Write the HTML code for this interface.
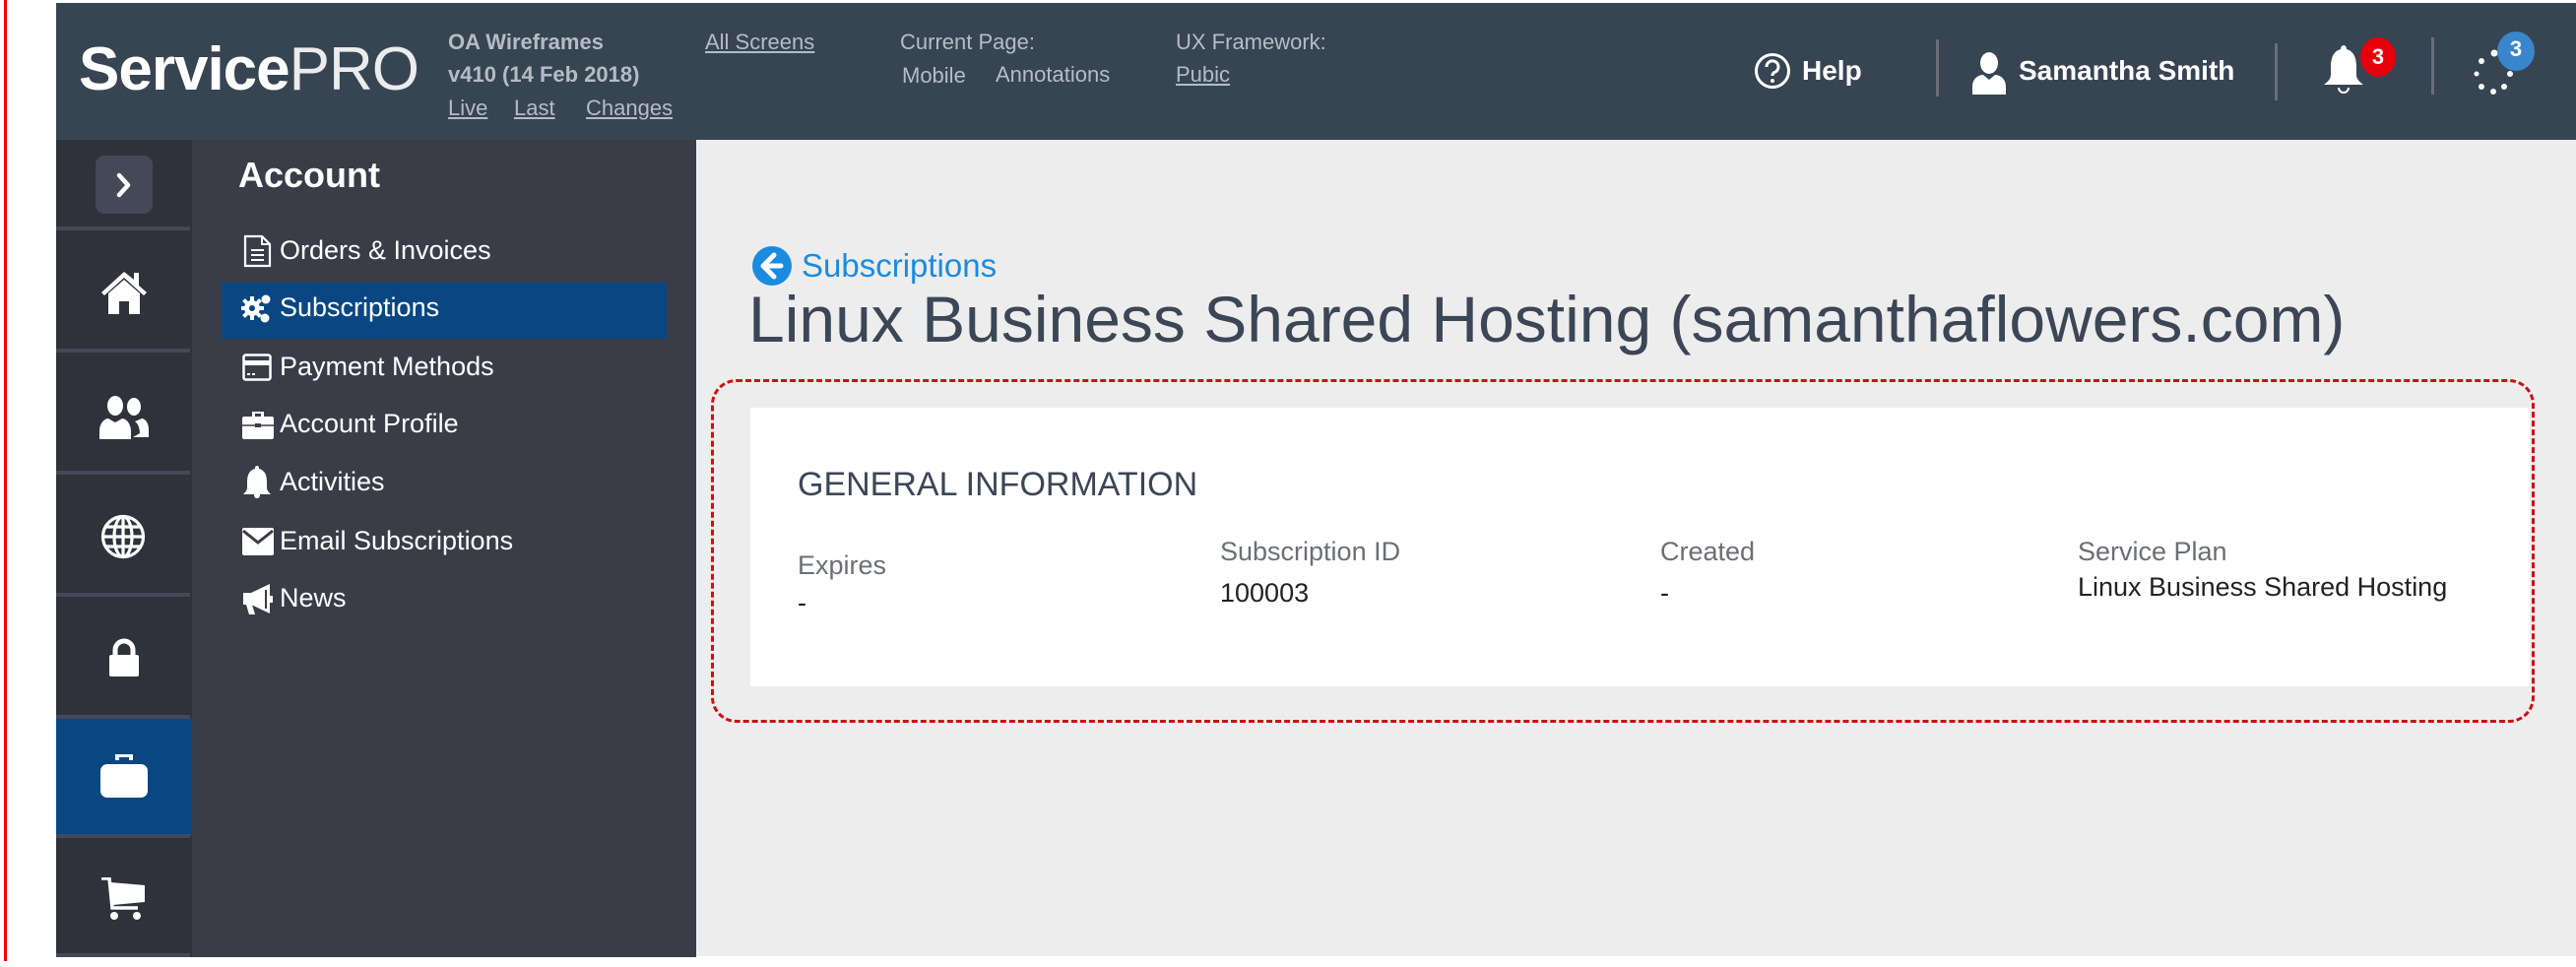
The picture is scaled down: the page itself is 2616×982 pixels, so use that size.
<!DOCTYPE html>
<html><head><meta charset="utf-8"><style>
*{margin:0;padding:0;box-sizing:border-box}
body{width:2616px;height:982px;background:#fff;position:relative;overflow:hidden;font-family:"Liberation Sans",sans-serif}
.a{position:absolute;white-space:nowrap}
.hdr{left:57px;top:3px;width:2559px;height:139px;background:#374452}
.ht{color:#b6bcc4;font-size:22px;line-height:22px}
.u{text-decoration:underline}
.rail{left:57px;top:142px;width:138px;height:830px;background:#2f323b}
.sep{position:absolute;left:57px;width:136px;height:4px;background:#454856}
.menu{left:195px;top:142px;width:512px;height:830px;background:#3a3c48}
.mi{color:#fff;font-size:27px;line-height:30px;left:284px}
.lbl{color:#6b6f74;font-size:27px;line-height:30px}
.val{color:#222;font-size:27px;line-height:30px}
.vsep{width:3px;height:58px;background:#6a6f75;top:40px}
</style></head><body>
<div class="a" style="left:4px;top:0;width:3px;height:976px;background:#e00"></div>
<div class="a hdr"></div>
<div class="a" style="left:80px;top:36px;font-size:62px;line-height:70px;color:#fff;letter-spacing:-1px"><b>Service</b><span style="font-weight:normal;opacity:.9">PRO</span></div>
<div class="a ht" style="left:455px;top:32px;font-weight:bold">OA Wireframes</div>
<div class="a ht" style="left:455px;top:65px;font-weight:bold">v410 (14 Feb 2018)</div>
<div class="a ht u" style="left:455px;top:99px">Live</div>
<div class="a ht u" style="left:522px;top:99px">Last</div>
<div class="a ht u" style="left:595px;top:99px">Changes</div>
<div class="a ht u" style="left:716px;top:32px">All Screens</div>
<div class="a ht" style="left:914px;top:32px">Current Page:</div>
<div class="a ht" style="left:916px;top:66px">Mobile</div>
<div class="a ht" style="left:1011px;top:65px">Annotations</div>
<div class="a ht" style="left:1194px;top:32px">UX Framework:</div>
<div class="a ht u" style="left:1194px;top:65px">Pubic</div>
<svg class="a" style="left:1781px;top:53px" width="38" height="38" viewBox="0 0 38 38"><circle cx="19" cy="19" r="16.5" fill="none" stroke="#fff" stroke-width="3"/><path d="M13 15a6 6 0 1 1 8 5.5c-1.5.7-2 1.5-2 3.5" fill="none" stroke="#fff" stroke-width="3"/><circle cx="19" cy="29" r="2" fill="#fff"/></svg>
<div class="a" style="left:1830px;top:57px;color:#fff;font-weight:bold;font-size:28px;line-height:30px">Help</div>
<div class="a vsep" style="left:1966px"></div>
<svg class="a" style="left:2001px;top:52px" width="38" height="44" viewBox="0 0 38 44"><ellipse cx="19" cy="12" rx="9" ry="11" fill="#fff"/><path d="M2 44v-8c0-8 6-12 11-12l6 5 6-5c5 0 11 4 11 12v8z" fill="#fff"/></svg>
<div class="a" style="left:2050px;top:57px;color:#fff;font-weight:bold;font-size:28px;line-height:30px">Samantha Smith</div>
<div class="a vsep" style="left:2310px;top:44px"></div>
<svg class="a" style="left:2358px;top:44px" width="44" height="52" viewBox="0 0 44 52"><path d="M22 2c2 0 3 2 3 4 8 2 10 10 10 18v8c0 4 3 7 7 10H2c4-3 7-6 7-10v-8c0-8 2-16 10-18 0-2 1-4 3-4z" fill="#fff"/><path d="M17 45a5 5 0 0 0 10 0" fill="none" stroke="#fff" stroke-width="2"/></svg>
<div class="a" style="left:2397px;top:38px;width:36px;height:40px;border-radius:50%;background:#e8000b;color:#fff;font-weight:bold;font-size:22px;line-height:40px;text-align:center">3</div>
<div class="a vsep" style="left:2469px;top:38px"></div>
<svg class="a" style="left:2505px;top:45px" width="56" height="56" viewBox="0 0 56 56"><g fill="#fff"><circle cx="28" cy="9" r="3.5"/><circle cx="40" cy="16" r="4.5"/><circle cx="44" cy="30" r="3"/><circle cx="38" cy="43" r="3"/><circle cx="27" cy="48" r="3"/><circle cx="15" cy="43" r="3"/><circle cx="10" cy="30" r="2.5"/><circle cx="15" cy="17" r="3"/></g></svg>
<div class="a" style="left:2536px;top:32px;width:38px;height:40px;border-radius:50%;background:#3a86cc;color:#fff;font-weight:bold;font-size:22px;line-height:36px;text-align:center">3</div>

<div class="a rail"></div>
<div class="a" style="left:57px;top:729px;width:138px;height:120px;background:#0a4782"></div>
<div class="sep" style="top:230px"></div><div class="sep" style="top:354px"></div><div class="sep" style="top:478px"></div><div class="sep" style="top:602px"></div><div class="sep" style="top:726px"></div><div class="sep" style="top:847px"></div><div class="sep" style="top:968px"></div>
<div class="a" style="left:97px;top:158px;width:58px;height:59px;border-radius:9px;background:#454856"></div>
<svg class="a" style="left:112px;top:172px" width="28" height="32" viewBox="0 0 28 32"><path d="M9 6l9 10-9 10" fill="none" stroke="#fff" stroke-width="4.5" stroke-linecap="round" stroke-linejoin="round"/></svg>
<svg class="a" style="left:101px;top:273px" width="50" height="48" viewBox="0 0 50 48"><path d="M25 3L2 24l3 3 20-18 20 18 3-3-8-7V4h-5v7z" fill="#fff"/><path d="M9 25l16-14 16 14v21H30V33h-10v13H9z" fill="#fff"/></svg>
<svg class="a" style="left:101px;top:400px" width="50" height="46" viewBox="0 0 50 46"><ellipse cx="16" cy="12" rx="8" ry="10" fill="#fff"/><path d="M0 46v-8c0-8 5-13 9-13l7 4 7-4c4 0 9 5 9 13v8z" fill="#fff"/><ellipse cx="35" cy="13" rx="7" ry="9" fill="#fff"/><path d="M34 44h16v-8c0-7-4-11-7-11l-7 3c3 2 5 7 5 12z" fill="#fff"/></svg>
<svg class="a" style="left:102px;top:522px" width="46" height="46" viewBox="0 0 46 46"><g fill="none" stroke="#fff" stroke-width="3.2"><circle cx="23" cy="23" r="20.5"/><ellipse cx="23" cy="23" rx="9" ry="20.5"/><path d="M23 2.5v41M2.5 23h41M5 13h36M5 33h36"/></g></svg>
<svg class="a" style="left:110px;top:648px" width="32" height="40" viewBox="0 0 32 40"><path d="M7 17V12a9 9 0 0 1 18 0v5" fill="none" stroke="#fff" stroke-width="5"/><rect x="1" y="17" width="30" height="22" rx="2" fill="#fff"/></svg>
<svg class="a" style="left:102px;top:764px" width="48" height="46" viewBox="0 0 48 46"><path d="M15 8V2h18v6h-4V5H19v3z" fill="#fff"/><rect x="0" y="12" width="48" height="34" rx="7" fill="#fff"/></svg>
<svg class="a" style="left:103px;top:891px" width="46" height="44" viewBox="0 0 46 44"><path d="M0 1h8l3 30h26" fill="none" stroke="#fff" stroke-width="3.5"/><path d="M9 5l35 3v17l-32 3z" fill="#fff"/><circle cx="13" cy="39" r="4" fill="#fff"/><circle cx="36" cy="39" r="4" fill="#fff"/></svg>

<div class="a menu"></div>
<div class="a" style="left:242px;top:158px;color:#fff;font-weight:bold;font-size:36px;line-height:40px">Account</div>
<div class="a" style="left:225px;top:287px;width:452px;height:57px;background:#0a4782"></div>
<svg class="a" style="left:247px;top:238px" width="30" height="34" viewBox="0 0 30 34"><path d="M2 2h17l8 8v22H2z" fill="none" stroke="#fff" stroke-width="2.2"/><path d="M19 2v8h8M8 16h13M8 21h13M8 26h13" fill="none" stroke="#fff" stroke-width="2"/></svg>
<div class="a mi" style="top:239px">Orders &amp; Invoices</div>
<svg class="a" style="left:245px;top:296px" width="32" height="34" viewBox="0 0 32 34"><g fill="#fff"><circle cx="11" cy="17" r="8"/><rect x="9" y="5" width="4" height="24"/><rect x="-1" y="15" width="24" height="4"/><rect x="9" y="5" width="4" height="24" transform="rotate(45 11 17)"/><rect x="9" y="5" width="4" height="24" transform="rotate(-45 11 17)"/><circle cx="25" cy="8" r="4.5"/><circle cx="24" cy="27" r="4.5"/></g><circle cx="11" cy="17" r="3" fill="#0a4782"/></svg>
<div class="a mi" style="top:297px">Subscriptions</div>
<svg class="a" style="left:246px;top:359px" width="30" height="28" viewBox="0 0 30 28"><rect x="1.5" y="1.5" width="27" height="25" rx="2" fill="none" stroke="#fff" stroke-width="2.5"/><rect x="1.5" y="7" width="27" height="5" fill="#fff"/><path d="M5 21h3M10 21h3" stroke="#fff" stroke-width="2"/></svg>
<div class="a mi" style="top:357px">Payment Methods</div>
<svg class="a" style="left:246px;top:416px" width="32" height="30" viewBox="0 0 32 30"><path d="M10 7V2h12v5h-3V4h-6v3z" fill="#fff"/><rect x="0" y="7" width="32" height="23" rx="2" fill="#fff"/><rect x="13" y="14" width="6" height="4" fill="#3a3c48"/><path d="M0 16h32" stroke="#3a3c48" stroke-width="1.5"/></svg>
<div class="a mi" style="top:415px">Account Profile</div>
<svg class="a" style="left:246px;top:472px" width="30" height="34" viewBox="0 0 30 34"><path d="M15 1c2 0 2 2 2 3 7 2 8 8 8 14v5c0 3 2 5 4 7H1c2-2 4-4 4-7v-5c0-6 1-12 8-14 0-1 0-3 2-3z" fill="#fff"/><circle cx="15" cy="31" r="3" fill="#fff"/></svg>
<div class="a mi" style="top:474px">Activities</div>
<svg class="a" style="left:246px;top:536px" width="32" height="28" viewBox="0 0 32 28"><rect x="0" y="0" width="32" height="28" rx="2" fill="#fff"/><path d="M1 3l15 12L31 3" fill="none" stroke="#3a3c48" stroke-width="3"/></svg>
<div class="a mi" style="top:534px">Email Subscriptions</div>
<svg class="a" style="left:246px;top:592px" width="32" height="34" viewBox="0 0 32 34"><path d="M1 10h8l19-9v30L9 22H1z" fill="#fff"/><path d="M4 22h6l3 10H7z" fill="#fff"/><path d="M24 7v19" stroke="#3a3c48" stroke-width="2"/><rect x="28" y="13" width="3" height="7" fill="#fff"/></svg>
<div class="a mi" style="top:592px">News</div>

<div class="a" style="left:707px;top:142px;width:1909px;height:829px;background:#ededed"></div>
<svg class="a" style="left:764px;top:250px" width="40" height="40" viewBox="0 0 40 40"><circle cx="20" cy="20" r="20" fill="#1a8be0"/><path d="M22 9L11 20l11 11M12 20h17" fill="none" stroke="#fff" stroke-width="5" stroke-linecap="round" stroke-linejoin="round"/></svg>
<div class="a" style="left:814px;top:251px;color:#1a8be0;font-size:33px;line-height:38px">Subscriptions</div>
<div class="a" style="left:760px;top:286px;color:#3b4656;font-size:66px;line-height:76px">Linux Business Shared Hosting (samanthaflowers.com)</div>
<div class="a" style="left:722px;top:385px;width:1852px;height:349px;border:3px dashed #cc1111;border-radius:26px"></div>
<div class="a" style="left:762px;top:414px;width:1807px;height:283px;background:#fff"></div>
<div class="a" style="left:810px;top:473px;color:#3b4656;font-size:34px;line-height:38px">GENERAL INFORMATION</div>
<div class="a lbl" style="left:810px;top:559px">Expires</div>
<div class="a val" style="left:810px;top:597px">-</div>
<div class="a lbl" style="left:1239px;top:545px">Subscription ID</div>
<div class="a val" style="left:1239px;top:587px">100003</div>
<div class="a lbl" style="left:1686px;top:545px">Created</div>
<div class="a val" style="left:1686px;top:587px">-</div>
<div class="a lbl" style="left:2110px;top:545px">Service Plan</div>
<div class="a val" style="left:2110px;top:581px">Linux Business Shared Hosting</div>
</body></html>
